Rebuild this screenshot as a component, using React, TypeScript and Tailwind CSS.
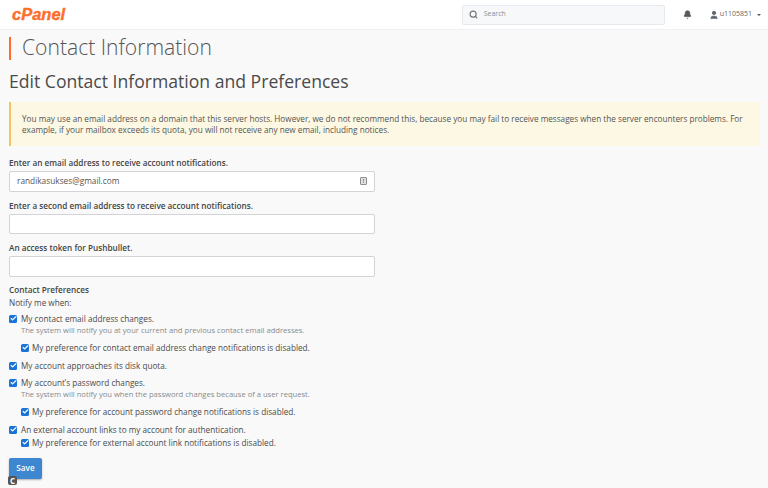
import { Bell, Check, Search, User } from 'lucide-react';

function Box() {
  return (
    <span className="flex h-[8px] w-[8px] shrink-0 items-center justify-center rounded-[1.5px] bg-[#1a73d9]">
      <Check className="h-[7px] w-[7px] text-white" strokeWidth={4} />
    </span>
  );
}

function CheckRow({ label, sub, className }: { label: string; sub?: boolean; className?: string }) {
  return (
    <div className={`flex h-[12px] items-center ${sub ? 'ml-[12px] gap-[3px]' : 'gap-[4px]'} ${className ?? ''}`}>
      <Box />
      <span className="text-[8.2px] leading-[12px] text-[#4a4a4a]">{label}</span>
    </div>
  );
}

function Help({ text, className }: { text: string; className?: string }) {
  return <p className={`ml-[12px] text-[7.6px] leading-[11px] text-[#8a8a8a] ${className ?? ''}`}>{text}</p>;
}

function Field({ label, value, className }: { label: string; value?: string; className?: string }) {
  return (
    <div className={className}>
      <label className="block text-[8.2px] font-semibold leading-[12px] text-[#444]">{label}</label>
      <div className="mt-[2px] flex h-[20.5px] w-[366px] items-center justify-between rounded-[2px] border border-[#d2d4d8] bg-white pl-[7px] pr-[7px]">
        <span className="text-[8.3px] text-[#555]">{value}</span>
        {value && (
          <span className="flex h-[8px] w-[7px] items-center justify-center rounded-[1px] border border-[#8d8d8d] bg-[#e2e2e2] text-[5px] font-bold leading-none text-[#666]">
            !
          </span>
        )}
      </div>
    </div>
  );
}

export default function App() {
  return (
    <div className="relative h-[488px] w-[768px] overflow-hidden bg-[#f9f9f9] font-['Open_Sans',sans-serif]">
      {/* top bar */}
      <header className="flex h-[30px] items-center border-b border-[#eef0f3] bg-white pl-[12px] pr-[7px]">
        <span className="font-['Liberation_Sans',sans-serif] text-[16.5px] font-bold italic leading-none text-[#fb6f2c] [-webkit-text-stroke:0.4px_#fb6f2c]">
          cPanel
        </span>
        <div className="ml-auto flex h-[20px] w-[203px] items-center gap-[6px] rounded-[2px] border border-[#e6eaef] bg-[#f6f8fa] pl-[6px]">
          <Search className="h-[9px] w-[9px] text-[#70757a]" strokeWidth={3} />
          <span className="text-[7px] text-[#8a8f94]">Search</span>
        </div>
        <Bell className="ml-[18px] h-[9px] w-[9px] fill-[#55595e] text-[#55595e]" />
        <User className="ml-[17px] h-[10px] w-[10px] fill-[#5b6470] text-[#5b6470]" />
        <span className="ml-[1px] text-[7px] text-[#666]">u1105851</span>
        <span className="ml-[5px] h-0 w-0 border-x-[2px] border-t-[2px] border-x-transparent border-t-[#555]" />
      </header>

      <main className="px-[9px]">
        <div className="mt-[7px] flex h-[23px] items-center border-l-2 border-[#ff6c2c] pl-[11px]">
          <h1 className="-mt-[3px] text-[21.1px] font-light leading-none text-[#555]">Contact Information</h1>
        </div>
        <h2 className="mt-[8px] text-[17.6px] font-normal leading-[26px] text-[#4a4a4a]">
          Edit Contact Information and Preferences
        </h2>

        <div className="mt-[8px] h-[44px] w-[751px] border-l-2 border-[#f0c75e] bg-[#fcf8e3] pl-[11px] pt-[11px] text-[8.2px] leading-[11px] text-[#555]">
          You may use an email address on a domain that this server hosts. However, we do not recommend this, because you may fail to receive messages when the server encounters problems. For example, if your mailbox exceeds its quota, you will not receive any new email, including notices.
        </div>

        <Field className="mt-[11px]" label="Enter an email address to receive account notifications." value="randikasukses@gmail.com" />
        <Field className="mt-[8px]" label="Enter a second email address to receive account notifications." />
        <Field className="mt-[8px]" label="An access token for Pushbullet." />

        <p className="mt-[7px] text-[8.2px] font-semibold leading-[12px] text-[#444]">Contact Preferences</p>
        <p className="mt-[1px] text-[8.2px] leading-[12px] text-[#4a4a4a]">Notify me when:</p>

        <CheckRow className="mt-[4px]" label="My contact email address changes." />
        <Help text="The system will notify you at your current and previous contact email addresses." />
        <CheckRow sub className="mt-[6px]" label="My preference for contact email address change notifications is disabled." />
        <CheckRow className="mt-[6px]" label="My account approaches its disk quota." />
        <CheckRow className="mt-[5px]" label="My account’s password changes." />
        <Help text="The system will notify you when the password changes because of a user request." />
        <CheckRow sub className="mt-[6px]" label="My preference for account password change notifications is disabled." />
        <CheckRow className="mt-[6px]" label="An external account links to my account for authentication." />
        <CheckRow sub className="mt-[1px]" label="My preference for external account link notifications is disabled." />

        <button className="mt-[9px] h-[21px] w-[33px] rounded-[2px] bg-[#3c87d0] text-[8.2px] font-semibold text-white shadow-[0_1px_2px_rgba(0,0,0,0.3)]">
          Save
        </button>
      </main>

      {/* floating badge at the corner */}
      <span className="absolute left-[8px] top-[476px] flex h-[9px] w-[9px] items-center justify-center rounded-[2px] bg-[#555] text-[8px] font-bold leading-none text-white">
        C
      </span>
    </div>
  );
}
